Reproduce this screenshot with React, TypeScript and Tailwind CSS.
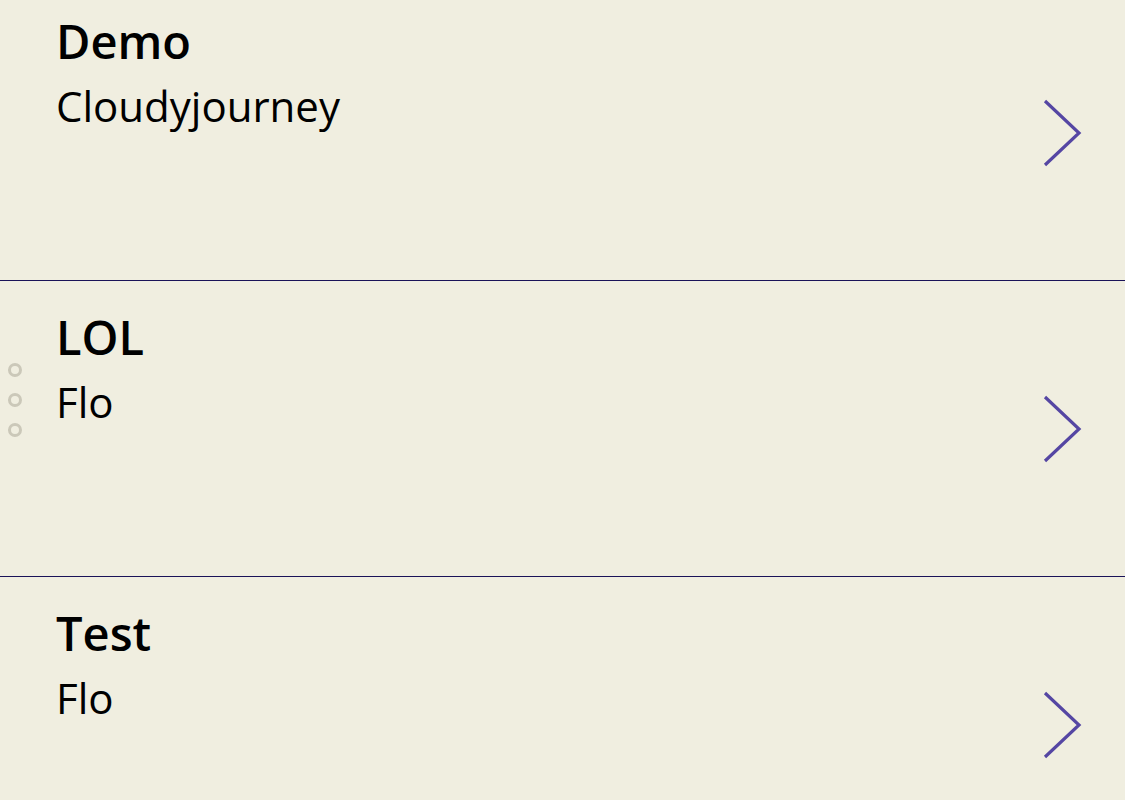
import React from 'react';

const items = [
  { title: 'Demo', sub: 'Cloudyjourney' },
  { title: 'LOL', sub: 'Flo', dots: true },
  { title: 'Test', sub: 'Flo' },
];

function Chevron() {
  return (
    <svg width="40" height="68" viewBox="0 0 40 68" className="ml-auto mr-[42px] shrink-0">
      <polyline points="2,2 36,34 2,66" fill="none" stroke="#5546a3" strokeWidth="3.2" />
    </svg>
  );
}

export default function App() {
  return (
    <div
      className="h-[800px] w-full overflow-hidden bg-[#f0eee0]"
      style={{ fontFamily: '"Open Sans", "Noto Sans", sans-serif' }}
    >
      <div className="-mt-[15px]">
        {items.map((it) => (
          <div key={it.title} className="relative flex h-[296px] items-center border-b border-[#1a1258]">
            <div className="self-start pl-[56px] pt-[33px] text-black">
              <div className="text-[47px] font-semibold leading-none">{it.title}</div>
              <div className="mt-[20px] text-[42px] leading-none">{it.sub}</div>
            </div>
            <Chevron />
            {it.dots && (
              <div className="absolute left-[8px] top-[82px] flex flex-col gap-[16px]">
                <span className="h-[14px] w-[14px] rounded-full border-[3px] border-[#cbc8b9]" />
                <span className="h-[14px] w-[14px] rounded-full border-[3px] border-[#cbc8b9]" />
                <span className="h-[14px] w-[14px] rounded-full border-[3px] border-[#cbc8b9]" />
              </div>
            )}
          </div>
        ))}
      </div>
    </div>
  );
}
